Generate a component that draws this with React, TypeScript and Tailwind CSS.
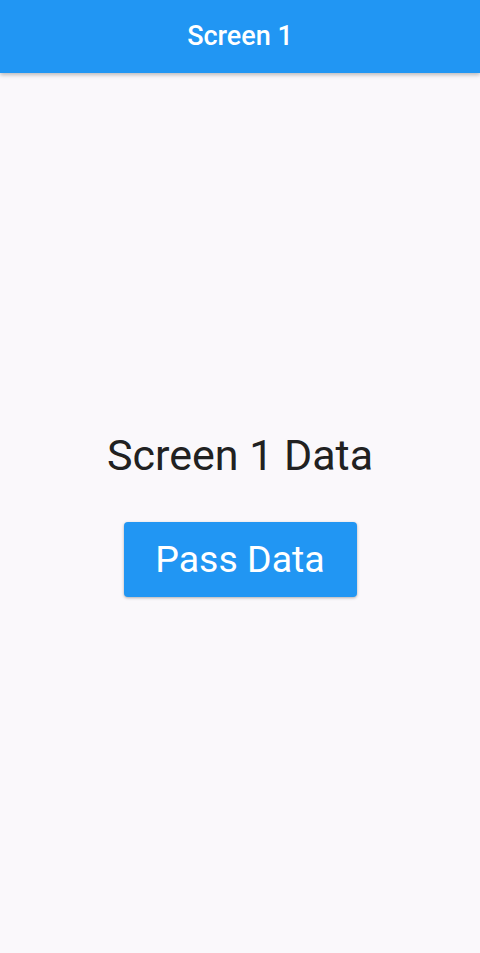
export default function App() {
  return (
    <div className="flex h-[953px] w-full flex-col bg-[#faf8fb] font-['Roboto',sans-serif]">
      <div className="relative z-10 flex h-[73px] shrink-0 items-center justify-center bg-[#2196f3] shadow-[0_2px_4px_rgba(0,0,0,0.25)]">
        <span className="text-[27px] font-medium text-white">Screen 1</span>
      </div>
      <div className="flex flex-1 flex-col items-center justify-center">
        <div className="text-[43px] leading-[50px] text-[#212121]">Screen 1 Data</div>
        <button className="mt-[42px] flex h-[75px] w-[233px] items-center justify-center rounded-[4px] bg-[#2196f3] text-[37.5px] text-white shadow-[0_1px_3px_rgba(0,0,0,0.3)]">
          Pass Data
        </button>
      </div>
    </div>
  );
}
